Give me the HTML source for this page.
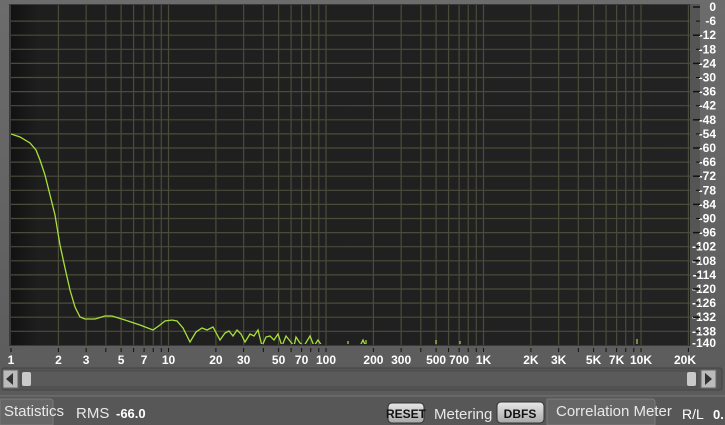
<!DOCTYPE html>
<html><head><style>
body{margin:0;width:725px;height:425px;overflow:hidden;background:#5e5e5e;font-family:"Liberation Sans Narrow","Liberation Sans",sans-serif;}
svg{position:absolute;left:0;top:0}
</style></head><body>
<svg width="725" height="425" xmlns="http://www.w3.org/2000/svg">
<defs>
<linearGradient id="bg" x1="0" y1="0" x2="0" y2="1"><stop offset="0" stop-color="#6c6c6c"/><stop offset="1" stop-color="#5a5a5a"/></linearGradient>
<linearGradient id="pl" x1="0" y1="0" x2="1" y2="0"><stop offset="0" stop-color="#121212"/><stop offset="0.04" stop-color="#1e1e1e"/><stop offset="1" stop-color="#222"/></linearGradient>
<linearGradient id="btn" x1="0" y1="0" x2="0" y2="1"><stop offset="0" stop-color="#e8e8e8"/><stop offset="1" stop-color="#a8a8a8"/></linearGradient>
<clipPath id="cp"><rect x="11" y="5" width="679" height="339"/></clipPath>
</defs>
<rect width="725" height="425" fill="url(#bg)"/>
<rect x="9" y="4" width="682" height="342" fill="#3a3a3a"/>
<rect x="11" y="5" width="679" height="340" fill="url(#pl)"/>
<g stroke="#4b4b3a" stroke-width="1.2" id="grid"></g>
<g clip-path="url(#cp)">
<polyline fill="none" stroke="#a8e03a" stroke-width="1.3" points="11,134 20,137 30,143 36,150 40,160 45,175 50,195 55,215 60,245 65,268 70,290 75,307 80,317 85,319 95,319 105,316 112,316 125,320 140,325 153,330 160,325 165,321 172,320 177,321 183,328 190,342 196,332 202,328 207,330 213,327 220,340 225,333 229,331 233,336 237,330 241,334 245,342 250,334 254,336 258,330 262,346 266,337 270,336 274,340 278,334 282,346 286,336 290,341 294,346 296,337 300,343 304,346 310,336 314,346 318,340 322,346 360,346 363,340 366,347 690,347"/>
<g stroke="#a8e03a" stroke-width="1.2">
<line x1="436" y1="340" x2="436" y2="345"/><line x1="460" y1="341" x2="460" y2="345"/><line x1="637" y1="339" x2="637" y2="345"/><line x1="348" y1="341" x2="348" y2="345"/><line x1="366" y1="340" x2="366" y2="345"/>
</g>
</g>
<rect x="690" y="4" width="10" height="342" fill="#555"/>
<g id="yl" fill="#fff" font-size="12" font-weight="bold" text-anchor="end"></g>
<g id="xl" fill="#fff" font-size="12" font-weight="bold" text-anchor="middle"></g>
<rect x="2" y="368" width="720" height="22" rx="2" fill="#555" stroke="#444"/>
<rect x="21" y="371" width="676" height="16" fill="#5a5a5a" stroke="#4a4a4a"/>
<rect x="3" y="370" width="15" height="18" fill="#bbb" stroke="#666"/>
<path d="M13,373 L6,379 L13,385Z" fill="#333"/>
<rect x="701" y="370" width="15" height="18" fill="#bbb" stroke="#666"/>
<path d="M705,373 L712,379 L705,385Z" fill="#333"/>
<rect x="22" y="372" width="9" height="14" rx="2" fill="#c9c9c9"/>
<rect x="687" y="372" width="9" height="14" rx="2" fill="#c9c9c9"/>
<rect x="0" y="396" width="725" height="29" fill="#575757"/>
<line x1="0" y1="396" x2="725" y2="396" stroke="#777"/>
<path d="M0,399 H50 Q53,399 53,402 V425 H0Z" fill="#666" stroke="#7a7a7a"/>
<path d="M547,399 H652 Q655,399 655,402 V425 H547Z" fill="#666" stroke="#7a7a7a"/>
<text x="4" y="416" fill="#e8e8e8" font-size="15" font-family="Liberation Sans">Statistics</text>
<text x="76" y="418" fill="#e8e8e8" font-size="15" font-family="Liberation Sans">RMS</text>
<text x="116" y="418" fill="#fff" font-size="13" font-weight="bold">-66.0</text>
<rect x="388" y="403" width="36" height="20" rx="4" fill="url(#btn)" stroke="#333"/>
<text x="406" y="418" fill="#111" font-size="12" font-weight="bold" text-anchor="middle">RESET</text>
<text x="434" y="419" fill="#e8e8e8" font-size="15" font-family="Liberation Sans">Metering</text>
<rect x="497" y="402" width="47" height="21" rx="4" fill="url(#btn)" stroke="#333"/>
<text x="520" y="418" fill="#111" font-size="12" font-weight="bold" text-anchor="middle">DBFS</text>
<text x="556" y="416" fill="#e8e8e8" font-size="15" font-family="Liberation Sans">Correlation Meter</text>
<text x="682" y="419" fill="#fff" font-size="14">R/L</text>
<text x="713" y="419" fill="#fff" font-size="13" font-weight="bold">0.</text>
</svg>
<script>
var NS="http://www.w3.org/2000/svg";
function el(n,a,p,t){var e=document.createElementNS(NS,n);for(var k in a)e.setAttribute(k,a[k]);if(t)e.textContent=t;document.getElementById(p).appendChild(e);}
function X(f){return 11+157.5*Math.log10(f);}
for(var d=1;d<=10000;d*=10)for(var m=1;m<10;m++){var f=d*m;if(f>20000)break;var x=X(f);if(f>1)el("line",{x1:x,y1:5,x2:x,y2:345},"grid");}
for(var k=1;k<=23;k++){var y=7+k*14.1;el("line",{x1:11,y1:y,x2:690,y2:y},"grid");}
for(var k=0;k<=23;k++){var y=7+k*14.1;el("text",{x:716,y:y+4},"yl",k==0?"0":"-"+(k*6));
 el("line",{x1:k%2?696:693,y1:y,x2:700,y2:y,stroke:"#111","stroke-width":k%2?1:1.5},"yl");}
el("text",{x:716,y:347},"yl","-140");
var L=[[1,"1"],[2,"2"],[3,"3"],[5,"5"],[7,"7"],[10,"10"],[20,"20"],[30,"30"],[50,"50"],[70,"70"],[100,"100"],[200,"200"],[300,"300"],[500,"500"],[700,"700"],[1000,"1K"],[2000,"2K"],[3000,"3K"],[5000,"5K"],[7000,"7K"],[10000,"10K"],[20000,"20K"]];
L.forEach(function(a){el("text",{x:Math.min(X(a[0]),685),y:364},"xl",a[1]);});
for(var d=1;d<=10000;d*=10)for(var m=1;m<10;m++){var f=d*m;if(f>20000)break;el("line",{x1:X(f),y1:348,x2:X(f),y2:352,stroke:"#111"},"xl");}
</script>
</body></html>
